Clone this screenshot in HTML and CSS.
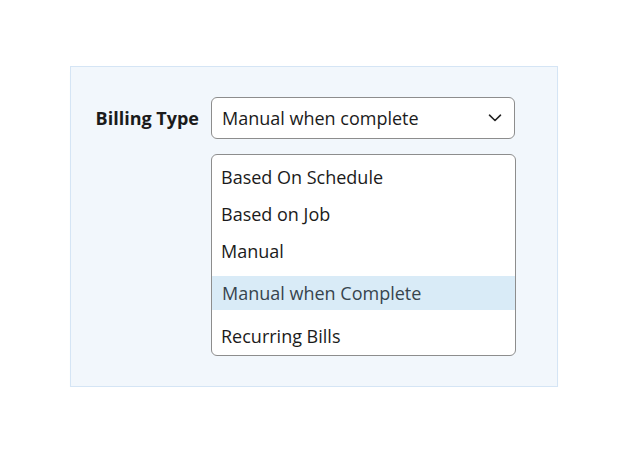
FILE: index.html
```html
<!DOCTYPE html>
<html>
<head>
<meta charset="utf-8">
<link rel="stylesheet" href="styles.css">
</head>
<body>
<div class="panel">
  <div class="form-grid">
    <label class="field-label">Billing Type</label>
    <div class="select">
      <span class="select-value">Manual when complete</span>
      <svg class="chevron" width="14" height="8" viewBox="0 0 14 8"><path d="M1.5 1.2 L7 6.5 L12.5 1.2" fill="none" stroke="#222" stroke-width="1.6" stroke-linecap="round" stroke-linejoin="round"/></svg>
    </div>
    <div class="spacer"></div>
    <ul class="options">
      <li class="option">Based On Schedule</li>
      <li class="option">Based on Job</li>
      <li class="option">Manual</li>
      <li class="option selected">Manual when Complete</li>
      <li class="option">Recurring Bills</li>
    </ul>
  </div>
</div>
</body>
</html>
```

FILE: styles.css
```css
html, body {
  margin: 0;
  padding: 0;
  background: #ffffff;
}
body {
  font-family: "Open Sans", "Noto Sans", sans-serif;
  color: #1b1b1b;
  padding: 66px 0 0 70px;
}
.panel {
  width: 486px;
  height: 319px;
  background: #f2f7fc;
  border: 1px solid #d5e5f5;
  box-shadow: 0 6px 1px 0 #f3f5f8;
  box-sizing: content-box;
}
.form-grid {
  display: grid;
  grid-template-columns: 128px 304px;
  column-gap: 12px;
  row-gap: 15px;
  padding-top: 30px;
  align-items: start;
}
.field-label {
  font-weight: 700;
  font-size: 18px;
  text-align: right;
  height: 42px;
  line-height: 42px;
}
.select {
  height: 42px;
  box-sizing: border-box;
  border: 1px solid #8d8d8d;
  border-radius: 6px;
  background: #fff;
  display: flex;
  align-items: center;
  justify-content: space-between;
  padding: 0 12px 0 10px;
  font-size: 18px;
}
.chevron {
  display: block;
}
.options {
  list-style: none;
  margin: 0;
  padding: 4px 0 0;
  width: 305px;
  box-sizing: border-box;
  border: 1px solid #8d8d8d;
  border-radius: 6px;
  background: #fff;
  font-size: 18px;
}
.option {
  height: 37px;
  line-height: 37px;
  padding-left: 9px;
}
.option.selected {
  height: 34px;
  line-height: 34px;
  margin: 6px 0 8px;
  background: #d9ebf7;
  color: #37444e;
  padding-left: 10px;
}
```
